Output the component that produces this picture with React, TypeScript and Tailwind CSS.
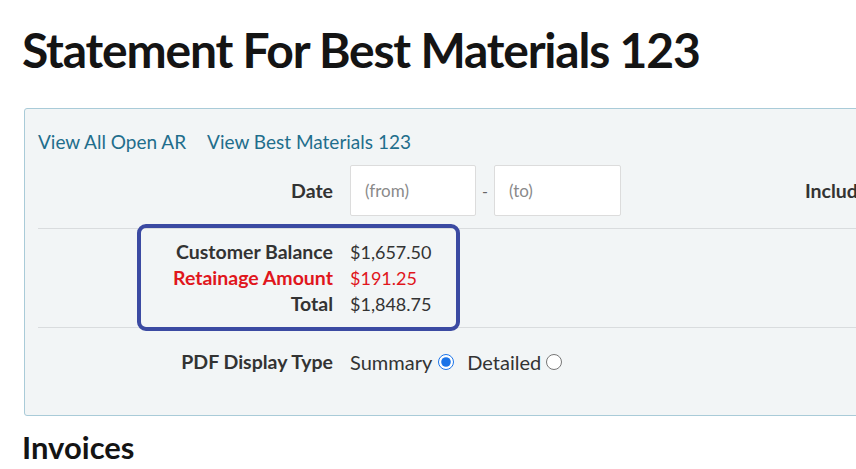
export default function App() {
  const font = { fontFamily: "Lato, 'Noto Sans', sans-serif" };
  return (
    <div className="w-[856px] h-[469px] overflow-hidden bg-white text-[#333]" style={font}>
      {/* Page title */}
      <h1 className="pl-[22px] pt-[22px] text-[48px] leading-[56px] font-bold tracking-[-1.2px] text-[#141414] whitespace-nowrap">
        Statement For Best Materials 123
      </h1>

      {/* Statement panel */}
      <div className="ml-[24px] mt-[30px] w-[1000px] rounded-[3px] border border-[#a9cbd8] bg-[#f2f5f6] pl-[13px] pt-[20px] pb-[40px]">
        <div className="flex gap-[21px] text-[19px] leading-[26px] text-[#1f6e8c]">
          <a className="cursor-pointer">View All Open AR</a>
          <a className="cursor-pointer">View Best Materials 123</a>
        </div>

        {/* Date filter */}
        <div className="mt-[10px] flex items-center pb-[12px]">
          <div className="w-[295px] text-right text-[19.5px] font-bold">Date</div>
          <input
            placeholder="(from)"
            className="ml-[17px] h-[51px] w-[126px] rounded-[2px] border border-[#dcdcdc] bg-white px-[14px] text-[17px] placeholder:text-[#8a8a8a] outline-none"
          />
          <span className="mx-[6px] text-[16px] text-[#666]">-</span>
          <input
            placeholder="(to)"
            className="h-[51px] w-[127px] rounded-[2px] border border-[#dcdcdc] bg-white px-[14px] text-[17px] placeholder:text-[#8a8a8a] outline-none"
          />
          <div className="ml-[184px] text-[19.5px] font-bold whitespace-nowrap">Include Paid Invoices</div>
        </div>

        {/* Balances */}
        <div className="border-y border-[#d9dcde]">
          <div className="ml-[99px] -mt-[5px] -mb-[4px] w-[323px] rounded-[9px] border-4 border-[#3b4aa2] pt-[11px] pb-[10px]">
            <div className="grid grid-cols-[192px_auto] gap-x-[17px] leading-[26px]">
              <div className="text-right text-[19.5px] font-bold">Customer Balance</div>
              <div className="text-[18px]">$1,657.50</div>
              <div className="text-right text-[19.5px] font-bold text-[#e0161c]">Retainage Amount</div>
              <div className="text-[18px] text-[#e0161c]">$191.25</div>
              <div className="text-right text-[19.5px] font-bold">Total</div>
              <div className="text-[18px]">$1,848.75</div>
            </div>
          </div>
        </div>

        {/* PDF display type */}
        <div className="mt-[21px] flex items-center leading-[26px]">
          <div className="w-[295px] text-right text-[19.5px] font-bold">PDF Display Type</div>
          <label className="ml-[17px] flex items-center gap-[6px] text-[20px]">
            Summary
            <input type="radio" name="pdf" defaultChecked className="m-0 h-[16px] w-[16px] accent-[#1a73e8]" />
          </label>
          <label className="ml-[13px] flex items-center gap-[5px] text-[20px]">
            Detailed
            <input type="radio" name="pdf" className="m-0 h-[16px] w-[16px]" />
          </label>
        </div>
      </div>

      <h2 className="pl-[22px] pt-[13px] text-[31px] leading-[36px] font-bold text-[#141414]">Invoices</h2>
    </div>
  );
}
